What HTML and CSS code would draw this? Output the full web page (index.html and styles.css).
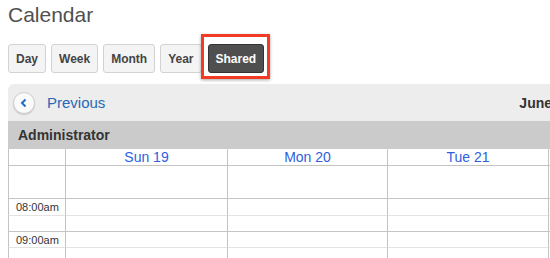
FILE: index.html
```html
<!DOCTYPE html>
<html lang="en">
<head>
    <meta charset="UTF-8">
    <title>Calendar</title>
    <link rel="stylesheet" href="styles.css">
</head>
<body>
    <div class="page">
        <h1 class="title">Calendar</h1>

        <!-- view switcher -->
        <div class="views">
            <button class="view-btn">Day</button>
            <button class="view-btn">Week</button>
            <button class="view-btn">Month</button>
            <button class="view-btn">Year</button>
            <button class="view-btn active">Shared</button>
        </div>

        <div class="calendar">
            <div class="cal-nav">
                <span class="back-btn">
                    <svg width="10" height="10" viewBox="0 0 10 10"><path d="M6.5 1.5 L3 5 L6.5 8.5" fill="none" stroke="#1f6dc0" stroke-width="2"/></svg>
                </span>
                <a class="prev-link">Previous</a>
                <span class="range">June 19 - 25, 2016</span>
            </div>

            <div class="user-bar">Administrator</div>

            <div class="grid">
                <div class="cell head"></div>
                <div class="cell head day">Sun 19</div>
                <div class="cell head day">Mon 20</div>
                <div class="cell head day">Tue 21</div>
                <div class="cell head day"></div>

                <div class="cell allday"></div>
                <div class="cell allday"></div>
                <div class="cell allday"></div>
                <div class="cell allday"></div>
                <div class="cell allday"></div>

                <div class="cell hour time">08:00am</div>
                <div class="cell hour"></div>
                <div class="cell hour"></div>
                <div class="cell hour"></div>
                <div class="cell hour"></div>

                <div class="cell half"></div>
                <div class="cell half"></div>
                <div class="cell half"></div>
                <div class="cell half"></div>
                <div class="cell half"></div>

                <div class="cell hour time">09:00am</div>
                <div class="cell hour"></div>
                <div class="cell hour"></div>
                <div class="cell hour"></div>
                <div class="cell hour"></div>

                <div class="cell half"></div>
                <div class="cell half"></div>
                <div class="cell half"></div>
                <div class="cell half"></div>
                <div class="cell half"></div>
            </div>
        </div>
    </div>
</body>
</html>
```

FILE: styles.css
```css
* {
    box-sizing: border-box;
}

html, body {
    margin: 0;
    overflow: hidden;
}

body {
    font-family: "Liberation Sans", Arial, sans-serif;
    color: #333;
    background: #fff;
}

.page {
    padding: 3px 0 0 8px;
    width: 900px;
}

.title {
    margin: 0;
    font-size: 21px;
    line-height: 24px;
    font-weight: normal;
    color: #505050;
}

/* view buttons */
.views {
    display: flex;
    gap: 5px;
    margin-top: 17px;
}

.view-btn {
    height: 29px;
    padding: 0 7px;
    border: 1px solid #d2d2d2;
    border-radius: 3px;
    background: #f4f4f4;
    font-family: inherit;
    font-size: 12px;
    font-weight: bold;
    color: #444;
}

.view-btn.active {
    position: relative;
    margin-left: 1px;
    background: #4f4f4f;
    border-color: #333;
    color: #fff;
}

/* annotation box */
.view-btn.active::after {
    content: "";
    position: absolute;
    top: -11px;
    left: -8px;
    right: -7px;
    bottom: -7px;
    border: 3px solid #f23b22;
    box-shadow: 0 1px 3px rgba(0, 0, 0, 0.35);
}

.calendar {
    margin-top: 11px;
}

.cal-nav {
    display: flex;
    align-items: center;
    height: 37px;
    padding-left: 5px;
    background: #ededed;
    border-top-left-radius: 6px;
}

.back-btn {
    display: flex;
    align-items: center;
    justify-content: center;
    width: 22px;
    height: 22px;
    border-radius: 50%;
    border: 1px solid #cfcfcf;
    background: #fafafa;
    box-shadow: 0 1px 1px rgba(0, 0, 0, 0.15);
}

.prev-link {
    margin-left: 12px;
    font-size: 15px;
    color: #2569b8;
}

.range {
    margin-left: 414px;
    font-size: 14px;
    font-weight: bold;
    color: #333;
    white-space: nowrap;
}

.user-bar {
    height: 28px;
    line-height: 28px;
    padding-left: 10px;
    background: #cbcbcb;
    font-size: 14px;
    font-weight: bold;
    color: #333;
}

/* week grid */
.grid {
    display: grid;
    grid-template-columns: 57px 162px 160px 161px 161px;
    grid-template-rows: 16px 33px 17px 16px 16px 16px;
}

.cell {
    border-left: 1px solid #c4c4c4;
}

.head.day {
    font-size: 14px;
    line-height: 16px;
    text-align: center;
    color: #2d5fe0;
}

.allday,
.hour {
    border-top: 1px solid #c4c4c4;
}

.half {
    border-top: 1px solid #e3e3e3;
}

.time {
    padding-left: 7px;
    font-size: 11px;
    line-height: 16px;
    color: #333;
}
```
